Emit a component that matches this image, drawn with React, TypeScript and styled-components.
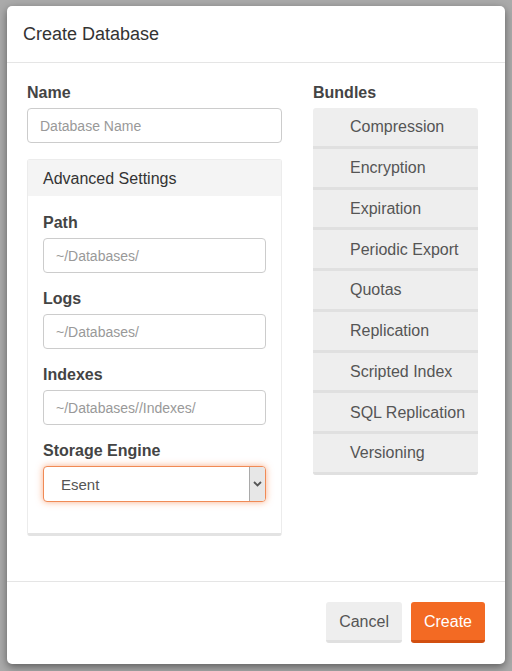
import React from "react";
import styled, { createGlobalStyle } from "styled-components";

const GlobalStyle = createGlobalStyle`
    html, body {
        margin: 0;
        padding: 0;
        background-color: #aaaaaa;
        font-family: "Liberation Sans", Arial, sans-serif;
    }

    * {
        box-sizing: border-box;
    }
`;

const PageDiv = styled.div`
    width: 512px;
    height: 671px;
    padding: 6px 7px 7px 7px;
`;

const ModalDiv = styled.div`
    width: 498px;
    height: 658px;
    background-color: #fff;
    border-radius: 5px;
    box-shadow: 0 3px 9px rgba(0, 0, 0, 0.45);
    display: flex;
    flex-direction: column;
`;

const HeaderDiv = styled.div`
    height: 57px;
    padding: 0 16px;
    display: flex;
    align-items: center;
    border-bottom: 1px solid #e5e5e5;
    font-size: 18px;
    color: #333;
`;

const BodyDiv = styled.div`
    flex: 1;
    padding: 20px 20px 0 20px;
    display: flex;
    gap: 31px;
`;

const LeftColumn = styled.div`
    width: 255px;
    display: flex;
    flex-direction: column;
`;

const RightColumn = styled.div`
    width: 165px;
    display: flex;
    flex-direction: column;
`;

const Label = styled.div`
    font-size: 16px;
    font-weight: bold;
    color: #444;
    line-height: 20px;
    margin-bottom: 5px;
`;

const TextInput = styled.input`
    width: 100%;
    height: 35px;
    border: 1px solid #ccc;
    border-radius: 4px;
    padding: 0 12px;
    font-family: "Liberation Sans", Arial, sans-serif;
    font-size: 14px;
    color: #555;
    outline: none;

    &::placeholder {
        color: #999;
    }
`;

const FieldGroup = styled.div<{ $gap: number }>`
    display: flex;
    flex-direction: column;
    margin-bottom: ${(p) => p.$gap}px;
`;

const PanelDiv = styled.div`
    border: 1px solid #ececec;
    border-bottom: 3px solid #e3e3e3;
    border-radius: 3px;
    background-color: #fff;
    height: 377px;
    display: flex;
    flex-direction: column;
`;

const PanelHeader = styled.div`
    height: 36px;
    padding: 1px 15px 0 15px;
    display: flex;
    align-items: center;
    background-color: #f4f4f4;
    font-size: 16px;
    color: #333;
`;

const PanelBody = styled.div`
    padding: 17px 15px 0 15px;
    display: flex;
    flex-direction: column;
`;

const SelectWrap = styled.div`
    position: relative;
    height: 36px;
`;

const Select = styled.select`
    width: 100%;
    height: 36px;
    appearance: none;
    border: 1px solid #f08a55;
    border-radius: 4px;
    box-shadow: 0 0 7px rgba(245, 110, 40, 0.55);
    padding: 0 17px;
    font-family: "Liberation Sans", Arial, sans-serif;
    font-size: 15px;
    color: #555;
    background-color: #fff;
    outline: none;
`;

const ArrowBox = styled.span`
    position: absolute;
    top: 1px;
    right: 1px;
    width: 16px;
    height: 34px;
    background-color: #e7e7e7;
    border-left: 1px solid #a9a9a9;
    border-radius: 0 3px 3px 0;
    display: flex;
    align-items: center;
    justify-content: center;
    pointer-events: none;
`;

const BundleList = styled.div`
    display: flex;
    flex-direction: column;
    border-radius: 3px;
    overflow: hidden;
`;

const BundleItem = styled.div`
    height: 40.75px;
    padding: 1px 0 0 37px;
    display: flex;
    align-items: center;
    background-color: #eeeeee;
    border-bottom: 3px solid #e0e0e0;
    font-size: 16px;
    color: #555;
`;

const FooterDiv = styled.div`
    height: 83px;
    border-top: 1px solid #e5e5e5;
    padding: 20px 20px 0 0;
    display: flex;
    justify-content: flex-end;
    align-items: flex-start;
    gap: 9px;
`;

const Button = styled.button<{ $primary?: boolean }>`
    height: 41px;
    padding: 2px 13px 0 13px;
    border: none;
    border-radius: 3px;
    border-bottom: 3px solid ${(p) => (p.$primary ? "#d24f10" : "#e0e0e0")};
    background-color: ${(p) => (p.$primary ? "#f36a23" : "#eeeeee")};
    color: ${(p) => (p.$primary ? "#fff" : "#555")};
    font-family: "Liberation Sans", Arial, sans-serif;
    font-size: 16px;
`;

const bundles = [
    "Compression",
    "Encryption",
    "Expiration",
    "Periodic Export",
    "Quotas",
    "Replication",
    "Scripted Index",
    "SQL Replication",
    "Versioning",
];

export default function App(): JSX.Element {
    return (
        <PageDiv>
            <GlobalStyle />
            <ModalDiv>
                <HeaderDiv>Create Database</HeaderDiv>
                <BodyDiv>
                    <LeftColumn>
                        <FieldGroup $gap={16}>
                            <Label>Name</Label>
                            <TextInput placeholder="Database Name" />
                        </FieldGroup>
                        <PanelDiv>
                            <PanelHeader>Advanced Settings</PanelHeader>
                            <PanelBody>
                                <FieldGroup $gap={16}>
                                    <Label>Path</Label>
                                    <TextInput placeholder="~/Databases/" />
                                </FieldGroup>
                                <FieldGroup $gap={16}>
                                    <Label>Logs</Label>
                                    <TextInput placeholder="~/Databases/" />
                                </FieldGroup>
                                <FieldGroup $gap={16}>
                                    <Label>Indexes</Label>
                                    <TextInput placeholder="~/Databases//Indexes/" />
                                </FieldGroup>
                                <FieldGroup $gap={0}>
                                    <Label>Storage Engine</Label>
                                    <SelectWrap>
                                        <Select defaultValue="Esent">
                                            <option>Esent</option>
                                            <option>Voron</option>
                                        </Select>
                                        <ArrowBox>
                                            <svg width="9" height="6" viewBox="0 0 9 6">
                                                <path d="M1 1 L4.5 4.5 L8 1" fill="none" stroke="#555" strokeWidth="1.8" />
                                            </svg>
                                        </ArrowBox>
                                    </SelectWrap>
                                </FieldGroup>
                            </PanelBody>
                        </PanelDiv>
                    </LeftColumn>
                    <RightColumn>
                        <Label>Bundles</Label>
                        <BundleList>
                            {bundles.map((b) => (
                                <BundleItem key={b}>{b}</BundleItem>
                            ))}
                        </BundleList>
                    </RightColumn>
                </BodyDiv>
                <FooterDiv>
                    <Button>Cancel</Button>
                    <Button $primary>Create</Button>
                </FooterDiv>
            </ModalDiv>
        </PageDiv>
    );
}
